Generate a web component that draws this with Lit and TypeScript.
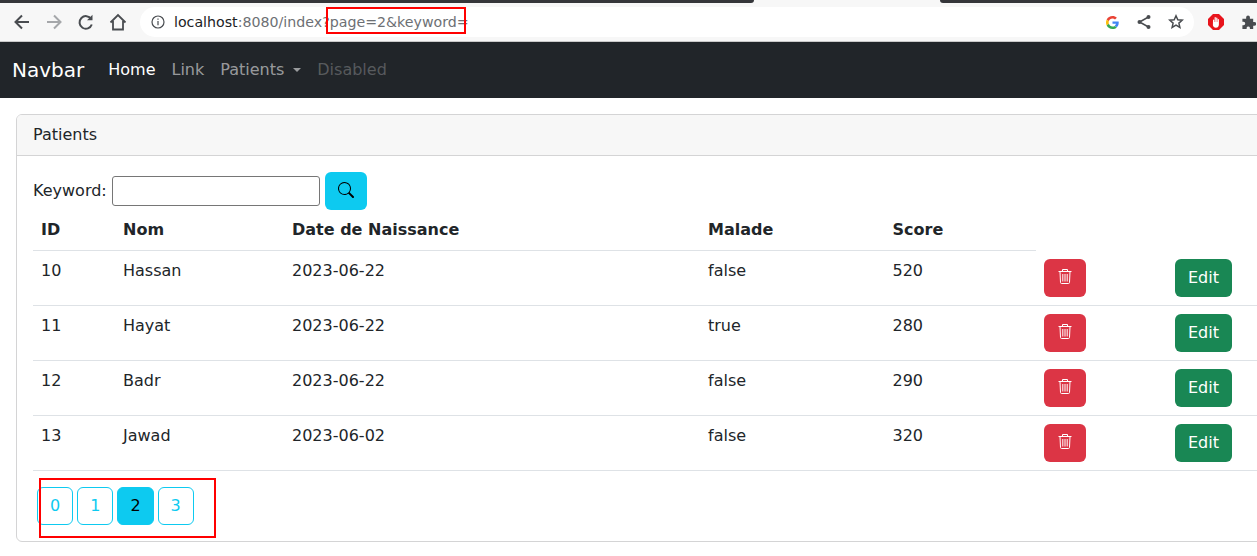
import { LitElement, html, css } from 'lit';
import { customElement } from 'lit/decorators.js';

const patients = [
  { id: 10, nom: 'Hassan', date: '2023-06-22', malade: 'false', score: 520 },
  { id: 11, nom: 'Hayat', date: '2023-06-22', malade: 'true', score: 280 },
  { id: 12, nom: 'Badr', date: '2023-06-22', malade: 'false', score: 290 },
  { id: 13, nom: 'Jawad', date: '2023-06-02', malade: 'false', score: 320 },
];

const pages = [0, 1, 2, 3];

const trashIcon = html`<svg class="trash" width="14" height="15" viewBox="0 0 14 15" fill="none" stroke="currentColor" stroke-width="1">
  <path d="M.5 2.500h13M4.500 2.300V.5h5v1.800M2 2.700l.5 10.800c0 .6.400 1 1 1h7c.6 0 1-.4 1-1l.5-10.800" />
  <path d="M4.800 5v7.500M7 5v7.500M9.200 5v7.500" />
</svg>`;

const searchIcon = html`<svg class="lens" width="16" height="16" viewBox="0 0 16 16" fill="currentColor">
  <path d="M11.742 10.344a6.5 6.5 0 1 0-1.397 1.398h-.001c.03.04.062.078.098.115l3.85 3.85a1 1 0 0 0 1.415-1.414l-3.85-3.85a1.007 1.007 0 0 0-.115-.1zM12 6.5a5.5 5.5 0 1 1-11 0 5.5 5.5 0 0 1 11 0z" />
</svg>`;

@customElement('app-root')
export class AppRoot extends LitElement {
  static styles = css`
    * {
      box-sizing: border-box;
    }
    :host {
      display: block;
      position: relative;
      width: 1257px;
      height: 556px;
      overflow: hidden;
      background: #fff;
      color: #212529;
      font-family: 'DejaVu Sans', sans-serif;
      font-size: 16px;
      line-height: 24px;
    }
    .tabstrip {
      height: 3px;
      background: #f7f7f7;
      display: flex;
      justify-content: space-between;
    }
    .tabstrip span {
      background: #35363a;
    }
    .tabstrip span:first-child {
      width: 754px;
      border-bottom-right-radius: 4px;
    }
    .tabstrip span:last-child {
      width: 317px;
      border-bottom-left-radius: 4px;
    }
    .toolbar {
      height: 39px;
      background: #f7f7f7;
      border-bottom: 1px solid #c9c9c9;
      display: flex;
      align-items: center;
      padding-left: 12px;
      color: #494c50;
    }
    .toolbar svg {
      display: block;
      flex: none;
    }
    .nav-icons {
      display: flex;
      gap: 12px;
      width: 128px;
    }
    .omnibox {
      width: 1054px;
      height: 30px;
      background: #fff;
      border-radius: 15px;
      display: flex;
      align-items: center;
      padding: 0 10px 0 11px;
      font-size: 14.2px;
    }
    .url {
      margin-left: 9px;
      color: #6d7074;
      white-space: nowrap;
      flex: 1;
    }
    .url b {
      font-weight: 400;
      color: #202124;
    }
    .omni-icons {
      display: flex;
      gap: 16px;
      align-items: center;
    }
    .omni-icons .google {
      margin-right: 1px;
    }
    .ext-icons {
      display: flex;
      gap: 17px;
      align-items: center;
      margin-left: 14px;
    }
    .navbar {
      height: 56px;
      background: #212529;
      display: flex;
      align-items: center;
      padding-left: 12px;
    }
    .brand {
      color: #fff;
      font-size: 20px;
      line-height: 30px;
      margin-right: 24px;
    }
    .nav-link {
      color: rgba(255, 255, 255, 0.55);
      margin-right: 16px;
      display: flex;
      align-items: center;
    }
    .nav-link.active {
      color: #fff;
    }
    .nav-link.disabled {
      color: rgba(255, 255, 255, 0.25);
    }
    .caret {
      width: 0;
      height: 0;
      margin-left: 9px;
      border-top: 4.8px solid currentColor;
      border-left: 4.8px solid transparent;
      border-right: 4.8px solid transparent;
    }
    .card {
      width: 1300px;
      margin: 16px 0 0 16px;
      border: 1px solid #d4d4d5;
      border-radius: 6px;
    }
    .card-header {
      height: 41px;
      padding: 8px 16px;
      background: #f7f7f7;
      border-bottom: 1px solid #d4d4d5;
      border-radius: 5px 5px 0 0;
    }
    .card-body {
      padding: 16px;
    }
    .search {
      display: flex;
      align-items: center;
      height: 38px;
    }
    .search label {
      margin-right: 5px;
    }
    .search input {
      width: 208px;
      height: 30px;
      margin-right: 5px;
      border: 1px solid #767676;
      border-radius: 3px;
      background: #fff;
    }
    .btn {
      display: inline-flex;
      align-items: center;
      justify-content: center;
      height: 38px;
      padding: 0 12px;
      border: 1px solid transparent;
      border-radius: 6px;
      font: inherit;
      color: #fff;
    }
    .btn-info {
      width: 42px;
      background: #0dcaf0;
      color: #000;
    }
    .btn-danger {
      width: 42px;
      background: #dc3545;
    }
    .btn-success {
      background: #198754;
    }
    .lens {
      margin-bottom: 2px;
    }
    .trash {
      margin-bottom: 3px;
    }
    table {
      width: 1268px;
      table-layout: fixed;
      border-collapse: collapse;
    }
    th {
      height: 40px;
      padding: 8px;
      text-align: left;
      font-weight: 700;
      border-bottom: 1px solid #dee2e6;
    }
    td {
      height: 55px;
      padding: 8px;
      vertical-align: top;
      border-bottom: 1px solid #dee2e6;
    }
    tr > .blank {
      border-bottom: none;
    }
    .col-id {
      width: 82px;
    }
    .col-nom {
      width: 169px;
    }
    .col-date {
      width: 416px;
    }
    .col-malade {
      width: 184.5px;
    }
    .col-score {
      width: 151.5px;
    }
    .col-delete {
      width: 131px;
    }
    .pagination {
      display: flex;
      gap: 4px;
      margin: 16px 0 0 4px;
      padding: 0;
      list-style: none;
    }
    .page {
      display: block;
      height: 38px;
      padding: 6px 12px;
      border: 1px solid #0dcaf0;
      border-radius: 6px;
      color: #0dcaf0;
    }
    .page.active {
      background: #0dcaf0;
      color: #000;
    }
    .mark {
      position: absolute;
      border: 2px solid #f00;
      pointer-events: none;
    }
    .mark-url {
      left: 326px;
      top: 7px;
      width: 140px;
      height: 27px;
    }
    .mark-pages {
      left: 39px;
      top: 478px;
      width: 177px;
      height: 60px;
    }
  `;

  render() {
    return html`
      <div class="tabstrip"><span></span><span></span></div>
      <div class="toolbar">
        <div class="nav-icons">
          <svg width="20" height="20" viewBox="0 0 20 20" fill="none" stroke="currentColor" stroke-width="2">
            <path d="M17 10H4.500M10 3.500 3.500 10l6.500 6.500" />
          </svg>
          <svg width="20" height="20" viewBox="0 0 20 20" fill="none" stroke="#a5a7aa" stroke-width="2">
            <path d="M3 10h12.500M10 3.500 16.500 10 10 16.500" />
          </svg>
          <svg width="20" height="20" viewBox="0 0 20 20" fill="none" stroke="currentColor" stroke-width="2">
            <path d="M15.800 12.500a6.300 6.300 0 1 1-.6-5.400" />
            <path d="M16.500 2.800v5.500H11" fill="currentColor" stroke="none" />
          </svg>
          <svg width="20" height="20" viewBox="0 0 20 20" fill="none" stroke="currentColor" stroke-width="1.800">
            <path d="M2.500 10.500 10 3l7.500 7.500M5 9v8.500h10V9" />
          </svg>
        </div>
        <div class="omnibox">
          <svg width="14" height="14" viewBox="0 0 14 14" fill="none" stroke="currentColor" stroke-width="1.200">
            <circle cx="7" cy="7" r="6" />
            <path d="M7 6v4.200M7 3.500v1.300" />
          </svg>
          <span class="url"><b>localhost</b>:8080/index?page=2&keyword=</span>
          <div class="omni-icons">
            <svg class="google" width="13" height="13" viewBox="0 0 48 48">
              <path fill="#ea4335" d="M24 9.500c3.500 0 6.700 1.200 9.200 3.600l6.900-6.900C35.900 2.400 30.500 0 24 0 14.600 0 6.500 5.400 2.600 13.200l8 6.200C12.400 13.700 17.700 9.500 24 9.500z" />
              <path fill="#4285f4" d="M47 24.500c0-1.600-.1-3.100-.4-4.500H24v9h12.900c-.6 3-2.200 5.500-4.700 7.200l7.300 5.700C43.800 37.900 47 31.800 47 24.500z" />
              <path fill="#fbbc05" d="M10.600 28.600c-.5-1.500-.8-3-.8-4.600s.3-3.100.8-4.600l-8-6.200C.9 16.500 0 20.100 0 24s.9 7.500 2.600 10.800l8-6.200z" />
              <path fill="#34a853" d="M24 48c6.500 0 11.900-2.100 15.900-5.800l-7.300-5.700c-2.200 1.500-4.900 2.300-8.500 2.300-6.300 0-11.600-4.200-13.500-9.900l-8 6.200C6.500 42.600 14.600 48 24 48z" />
            </svg>
            <svg width="16" height="16" viewBox="0 0 16 16" fill="none" stroke="currentColor" stroke-width="1.500">
              <path d="M12.500 3 3.500 8l9 5" />
              <circle cx="12.500" cy="3" r="2" fill="currentColor" stroke="none" />
              <circle cx="3.500" cy="8" r="2" fill="currentColor" stroke="none" />
              <circle cx="12.500" cy="13" r="2" fill="currentColor" stroke="none" />
            </svg>
            <svg width="16" height="16" viewBox="0 0 16 16" fill="none" stroke="currentColor" stroke-width="1.500">
              <path d="m8 1.800 1.800 4 4.400.4-3.300 2.900 1 4.300L8 11.200l-3.900 2.200 1-4.300-3.300-2.900 4.400-.4z" />
            </svg>
          </div>
        </div>
        <div class="ext-icons">
          <svg width="16" height="16" viewBox="0 0 16 16">
            <path fill="#e8141c" d="M5 0h6l5 5v6l-5 5H5l-5-5V5z" />
            <path fill="#fff" d="M5 6c0-.8 1.100-.8 1.200 0v2h.4V3.500c0-.8 1.200-.8 1.200 0V8h.4V4c0-.8 1.200-.8 1.200 0v4h.3V5.500c0-.8 1.200-.8 1.200 0v5c0 2-1.300 3.300-3 3.300-1.800 0-2.600-1-3-2.500z" />
          </svg>
          <svg width="15" height="15" viewBox="0 0 16 16" fill="currentColor">
            <path d="M5.500 2.500a2 2 0 0 1 4 0V4H13v3.500h1.300a2 2 0 0 1 0 4H13V15H9.500v-1.300a1.800 1.800 0 0 0-3.500 0V15H1.500v-4.200h1.200a1.800 1.800 0 0 0 0-3.600H1.500V4h4z" />
          </svg>
        </div>
      </div>
      <nav class="navbar">
        <span class="brand">Navbar</span>
        <span class="nav-link active">Home</span>
        <span class="nav-link">Link</span>
        <span class="nav-link">Patients<i class="caret"></i></span>
        <span class="nav-link disabled">Disabled</span>
      </nav>
      <section class="card">
        <div class="card-header">Patients</div>
        <div class="card-body">
          <form class="search">
            <label>Keyword:</label>
            <input type="text" />
            <button class="btn btn-info" type="button">${searchIcon}</button>
          </form>
          <table>
            <colgroup>
              <col class="col-id" />
              <col class="col-nom" />
              <col class="col-date" />
              <col class="col-malade" />
              <col class="col-score" />
              <col class="col-delete" />
              <col />
            </colgroup>
            <thead>
              <tr>
                <th>ID</th>
                <th>Nom</th>
                <th>Date de Naissance</th>
                <th>Malade</th>
                <th>Score</th>
                <th class="blank"></th>
                <th class="blank"></th>
              </tr>
            </thead>
            <tbody>
              ${patients.map(
                (p) => html`<tr>
                  <td>${p.id}</td>
                  <td>${p.nom}</td>
                  <td>${p.date}</td>
                  <td>${p.malade}</td>
                  <td>${p.score}</td>
                  <td><button class="btn btn-danger" type="button">${trashIcon}</button></td>
                  <td><button class="btn btn-success" type="button">Edit</button></td>
                </tr>`
              )}
            </tbody>
          </table>
          <ul class="pagination">
            ${pages.map(
              (n) => html`<li><a class="page ${n === 2 ? 'active' : ''}">${n}</a></li>`
            )}
          </ul>
        </div>
      </section>
      <div class="mark mark-url"></div>
      <div class="mark mark-pages"></div>
    `;
  }
}
